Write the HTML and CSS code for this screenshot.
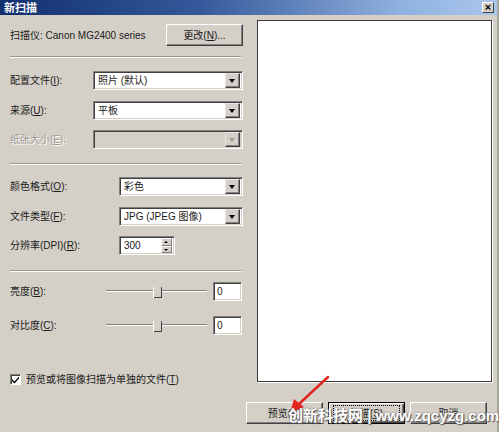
FILE: index.html
```html
<!DOCTYPE html>
<html lang="zh-CN">
<head>
<meta charset="utf-8">
<title>新扫描</title>
<link rel="stylesheet" href="styles.css">
</head>
<body>
<div class="window">
  <div class="titlebar">
    <span class="title">新扫描</span>
    <span class="close">×</span>
  </div>
  <div class="client">
    <div class="top">
      <div class="left">
        <div class="row row-scanner">
          <span class="label">扫描仪: Canon MG2400 series</span>
          <button class="btn btn-change">更改(<u>N</u>)...</button>
        </div>
        <div class="sep sep1"></div>
        <div class="row r1">
          <span class="label">配置文件(<u>I</u>):</span>
          <div class="combo combo-wide"><span class="val">照片 (默认)</span><span class="arrow"></span></div>
        </div>
        <div class="row r2">
          <span class="label">来源(<u>U</u>):</span>
          <div class="combo combo-wide"><span class="val">平板</span><span class="arrow"></span></div>
        </div>
        <div class="row r3">
          <span class="label disabled">纸张大小(<u>E</u>):</span>
          <div class="combo combo-wide combo-disabled"><span class="val"></span><span class="arrow"></span></div>
        </div>
        <div class="sep sep2"></div>
        <div class="row r4">
          <span class="label">颜色格式(<u>O</u>):</span>
          <div class="combo combo-narrow"><span class="val">彩色</span><span class="arrow"></span></div>
        </div>
        <div class="row r5">
          <span class="label">文件类型(<u>F</u>):</span>
          <div class="combo combo-narrow"><span class="val">JPG (JPEG 图像)</span><span class="arrow"></span></div>
        </div>
        <div class="row r6">
          <span class="label">分辨率(DPI)(<u>R</u>):</span>
          <div class="spin"><span class="val">300</span><span class="spin-btns"><span class="sb sb-up"></span><span class="sb sb-down"></span></span></div>
        </div>
        <div class="sep sep3"></div>
        <div class="row r7">
          <span class="label">亮度(<u>B</u>):</span>
          <div class="slider"><span class="track"></span><span class="thumb"></span></div>
          <div class="textbox">0</div>
        </div>
        <div class="row r8">
          <span class="label">对比度(<u>C</u>):</span>
          <div class="slider"><span class="track"></span><span class="thumb"></span></div>
          <div class="textbox">0</div>
        </div>
        <div class="row r9">
          <span class="checkbox"><svg width="9" height="9" viewBox="0 0 9 9"><path d="M1 4 L3.5 6.5 L8 1.5 L8 3.5 L3.5 8.5 L1 6 Z" fill="#000"/></svg></span>
          <span class="label cb-label">预览或将图像扫描为单独的文件(<u>T</u>)</span>
        </div>
      </div>
      <div class="preview"></div>
    </div>
    <div class="buttons">
      <button class="btn">预览(<u>P</u>)</button>
      <button class="btn btn-default"><span class="focus">扫描(<u>S</u>)</span></button>
      <button class="btn">取消</button>
    </div>
  </div>
  <svg class="arrow-mark" width="60" height="60" viewBox="0 0 60 60">
    <line x1="42" y1="2" x2="13" y2="29" stroke="#e3261f" stroke-width="2.5" stroke-linecap="round"/>
    <polygon points="4,38 8,24 18,32" fill="#e3261f"/>
  </svg>
  <div class="watermark"><span class="wm-cjk">创新科技网</span> | www.zqcyzg.com</div>
</div>
</body>
</html>
```
FILE: styles.css
```css
* { box-sizing: border-box; }
html, body { margin: 0; padding: 0; }
body {
  width: 499px;
  height: 432px;
  overflow: hidden;
  background: #d4d0c8;
  font-family: "Liberation Sans", "Noto Sans CJK SC", sans-serif;
  font-size: 10px;
  color: #1a1a1a;
}
.window {
  position: relative;
  width: 499px;
  height: 432px;
  background: #d4d0c8;
  border-right: 2px solid #a8a49c;
}
.titlebar {
  height: 15px;
  background: linear-gradient(to right, #12306e 0%, #34589a 40%, #8fb0de 80%, #a9c6ee 100%);
  display: flex;
  align-items: center;
  justify-content: space-between;
  padding: 0 3px 0 4px;
}
.title {
  color: #fff;
  font-family: "Noto Sans CJK SC", sans-serif;
  font-weight: bold;
  font-size: 11px;
  line-height: 15px;
}
.close {
  width: 12px;
  height: 11px;
  background: #d4d0c8;
  border: 1px solid;
  border-color: #fff #404040 #404040 #fff;
  font-family: "Liberation Sans", sans-serif;
  font-size: 11px;
  font-weight: bold;
  line-height: 8px;
  text-align: center;
  color: #000;
}
.client {
  display: flex;
  flex-direction: column;
}
.top {
  display: flex;
  height: 375px;
}
.left {
  width: 247px;
  padding: 9px 0 0 10px;
  display: flex;
  flex-direction: column;
}
.row {
  display: flex;
  align-items: center;
  height: 19px;
  position: relative;
}
.label {
  white-space: nowrap;
  line-height: 13px;
}
.label u { text-decoration: underline; }
.label.disabled {
  color: #a09c94;
  text-shadow: 1px 1px 0 #fff;
}
.row-scanner { height: 22px; }
.btn {
  font-family: "Liberation Sans", "Noto Sans CJK SC", sans-serif;
  font-size: 10px;
  color: #1a1a1a;
  width: 77px;
  height: 22px;
  padding: 0;
  background: #d4d0c8;
  border: 1px solid;
  border-color: #fff #404040 #404040 #fff;
  box-shadow: inset -1px -1px 0 #808080;
  display: flex;
  align-items: center;
  justify-content: center;
  line-height: 13px;
}
.btn-change { margin-left: auto; margin-right: 4px; }
.sep {
  width: 231px;
  height: 2px;
  border-top: 1px solid #9c988f;
  border-bottom: 1px solid #fff;
}
.sep1 { margin-top: 10px; }
.r1 { margin-top: 13px; }
.r2 { margin-top: 11px; }
.r3 { margin-top: 10px; }
.sep2 { margin-top: 14px; }
.r4 { margin-top: 12px; }
.r5 { margin-top: 11px; }
.r6 { margin-top: 10px; }
.sep3 { margin-top: 15px; }
.r7 { margin-top: 10px; }
.r8 { margin-top: 15px; }
.r9 { margin-top: 37px; height: 14px; }

.combo, .spin, .textbox {
  height: 19px;
  background: #fff;
  border: 1px solid;
  border-color: #808080 #fff #fff #808080;
  box-shadow: inset 1px 1px 0 #404040, inset -1px -1px 0 #d4d0c8;
  display: flex;
  align-items: center;
  position: absolute;
  top: 0;
}
.combo-wide { left: 83px; width: 150px; }
.combo-narrow { left: 109px; width: 124px; }
.combo-disabled { background: #d4d0c8; }
.val {
  flex: 1;
  padding-left: 4px;
  white-space: nowrap;
  line-height: 13px;
}
.arrow {
  width: 15px;
  height: 15px;
  margin-right: 2px;
  background: #d4d0c8;
  border: 1px solid;
  border-color: #e8e6e0 #404040 #404040 #e8e6e0;
  box-shadow: inset -1px -1px 0 #808080;
  position: relative;
}
.arrow::after {
  content: "";
  position: absolute;
  left: 3px;
  top: 5px;
  border-left: 3.5px solid transparent;
  border-right: 3.5px solid transparent;
  border-top: 4px solid #000;
}
.combo-disabled .arrow::after { border-top-color: #a09c94; }
.spin { left: 109px; width: 56px; }
.spin-btns {
  display: flex;
  flex-direction: column;
  width: 11px;
  height: 15px;
  margin-right: 2px;
}
.sb {
  flex: 1;
  background: #d4d0c8;
  border: 1px solid;
  border-color: #fff #808080 #808080 #fff;
  position: relative;
}
.sb::after {
  content: "";
  position: absolute;
  left: 2px;
  top: 2px;
  border-left: 2.5px solid transparent;
  border-right: 2.5px solid transparent;
}
.sb-up::after { border-bottom: 2px solid #000; }
.sb-down::after { border-top: 2px solid #000; }

.slider {
  position: absolute;
  left: 96px;
  top: 0;
  width: 101px;
  height: 19px;
}
.track {
  position: absolute;
  left: 0;
  right: 0;
  top: 8px;
  height: 2px;
  border-top: 1px solid #808080;
  border-bottom: 1px solid #fff;
}
.thumb {
  position: absolute;
  left: 47px;
  top: 1px;
  width: 9px;
  height: 15px;
  background: #d4d0c8;
  clip-path: polygon(0 30%, 50% 0, 100% 30%, 100% 100%, 0 100%);
  box-shadow: inset 1px 0 0 #fff, inset -1px -1px 0 #404040;
}
.textbox {
  left: 203px;
  width: 29px;
  padding-left: 3px;
}
.checkbox {
  width: 11px;
  height: 11px;
  background: #fff;
  border: 1px solid;
  border-color: #808080 #fff #fff #808080;
  box-shadow: inset 1px 1px 0 #404040;
  display: flex;
  align-items: center;
  justify-content: center;
  margin-right: 5px;
}
.preview {
  margin-top: 5px;
  margin-left: 10px;
  width: 235px;
  height: 362px;
  background: #fff;
  border: 1px solid #3a3a3a;
  box-shadow: 1px 1px 0 #fff;
}
.buttons {
  display: flex;
  justify-content: flex-end;
  gap: 5px;
  margin-top: 12px;
  padding-right: 10px;
}
.btn-default {
  border: 1px solid #000;
  box-shadow: inset 1px 1px 0 #fff, inset -1px -1px 0 #404040, inset -2px -2px 0 #808080;
}
.focus {
  border: 1px dotted #000;
  width: 67px;
  height: 16px;
  display: flex;
  align-items: center;
  justify-content: center;
}
.arrow-mark {
  position: absolute;
  left: 286px;
  top: 375px;
}
.watermark {
  position: absolute;
  left: 288px;
  top: 405px;
  font-family: "Liberation Sans", "Noto Sans CJK SC", sans-serif;
  font-size: 15px;
  font-weight: bold;
  color: #fff;
  white-space: nowrap;
  line-height: 20px;
  text-shadow: 0 0 2px #666, 1px 1px 1px #555;
}
.wm-cjk { font-family: "Noto Sans CJK SC", sans-serif; }
```
